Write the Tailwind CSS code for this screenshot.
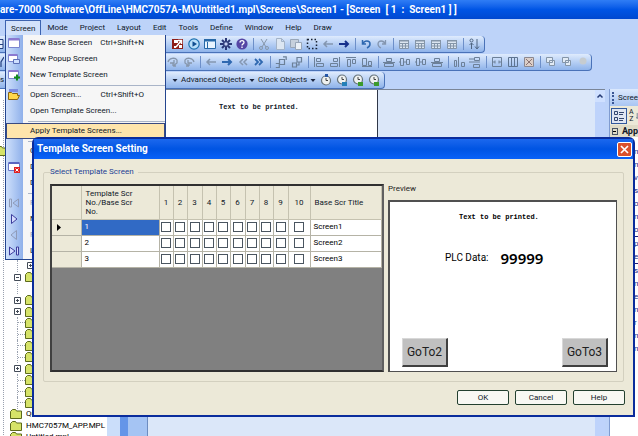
<!DOCTYPE html>
<html lang="en">
<head>
  <meta charset="UTF-8" />
  <meta name="viewport" content="width=device-width, initial-scale=1.0" />
  <title>Template Screen Setting</title>
  <script src="https://cdn.jsdelivr.net/npm/@tailwindcss/browser@4"></script>
</head>
<body class="relative flex h-screen flex-col overflow-hidden bg-[#bdd3f9] font-['Roboto','Noto_Sans',sans-serif] text-[8px] leading-3 text-[#101828]">

  <!-- Icons -->
  <svg class="hidden" xmlns="http://www.w3.org/2000/svg">
    <symbol id="window" viewBox="0 0 12 12"><path fill="#fff" stroke="#7b86cf" d="M.5 1.5h11v9H.5z"/><path fill="#8c7ad0" d="M1 1h10v2.500H1z"/></symbol>
    <symbol id="popup" viewBox="0 0 12 12"><path fill="#fff" stroke="#7b86cf" d="M.5 1.500h9v7h-9z"/><path fill="#8c7ad0" d="M1 1h8v2H1z"/><path fill="#cfe0ff" stroke="#5c70b8" d="M5.500 6.500h6v4h-6z"/></symbol>
    <symbol id="template" viewBox="0 0 12 12"><path fill="#fff" stroke="#7b86cf" d="M.5 1.500h10v8H.5z"/><path fill="#8c7ad0" d="M1 1h9v2H1z"/><path stroke="#118a1c" stroke-width="2" d="M9 5.500v6M6 8.500h6"/></symbol>
    <symbol id="open" viewBox="0 0 12 12"><path fill="#7d8ce0" d="M1 0h9v3H1z"/><path fill="#ffd84a" stroke="#8a6410" d="M.5 10.500v-7h3l1 1h5v2h2l-2 4z"/></symbol>
    <symbol id="remove" viewBox="0 0 12 12"><path fill="#fff" stroke="#6b78c8" d="M.5 1.500h11v8H.5z"/><path fill="#5a66c0" d="M1 1h10v2H1z"/><path fill="#e02020" d="M6 6h6v6H6z"/><path stroke="#fff" d="m7.500 7.500 3 3m0-3-3 3"/></symbol>
    <symbol id="first" viewBox="0 0 12 12"><path fill="none" stroke="currentColor" d="M1.500 2v8h2V2zM10.500 2v8L5 6z"/></symbol>
    <symbol id="next" viewBox="0 0 12 12"><path fill="#d5dcff" stroke="currentColor" d="M3.500 1.500v9L9 6z"/></symbol>
    <symbol id="prev" viewBox="0 0 12 12"><path fill="none" stroke="currentColor" d="M8.500 1.500v9L3 6z"/></symbol>
    <symbol id="last" viewBox="0 0 12 12"><path fill="#d5dcff" stroke="currentColor" d="M1.500 2v8L7 6zM8.500 2v8h2V2z"/></symbol>
    <symbol id="export" viewBox="0 0 12 12"><path fill="#8e1d18" d="M0 1h11v10H0z"/><path fill="#fff" d="M2 2h4v3H2zM2 8h2v2H2zM7 7h3v3H7z"/><path stroke="#fff" stroke-width="1.500" d="m4 9 5-6M6 2.500h3.500V6" fill="none"/></symbol>
    <symbol id="run" viewBox="0 0 12 12"><circle cx="6" cy="6" r="5.200" fill="#b9e0fa" stroke="#1c6fae" stroke-width="1.200"/><path fill="#114f90" d="M4.500 3.200v5.600L9 6z"/></symbol>
    <symbol id="layout" viewBox="0 0 12 12"><path fill="#e8f4ff" stroke="#2768a8" d="M.5 1.500h11v9H.5zM3.500 4v6"/><path fill="#2768a8" d="M0 1h12v2.500H0z"/></symbol>
    <symbol id="gear" viewBox="0 0 12 12"><path stroke="#2b3878" stroke-width="2" d="M6 0v12M0 6h12M2 2l8 8M10 2l-8 8"/><circle cx="6" cy="6" r="2.200" fill="#c5d2f5" stroke="#2b3878"/></symbol>
    <symbol id="help" viewBox="0 0 12 12"><circle cx="6" cy="6" r="5.600" fill="#5545a5"/><path fill="none" stroke="#fff" stroke-width="1.300" d="M4 4.500C4 2 8 2 8 4.500 8 6 6 5.800 6 7.500M6 8.500V10"/></symbol>
    <symbol id="cut" viewBox="0 0 12 12"><path fill="none" stroke="#8797ab" d="m3 1 5 8M9 1 4 9"/><circle cx="3" cy="10" r="1.500" fill="none" stroke="#8797ab"/><circle cx="9" cy="10" r="1.500" fill="none" stroke="#8797ab"/></symbol>
    <symbol id="copy" viewBox="0 0 12 12"><path fill="#dce6f2" stroke="#a3b3c8" d="M2.500.5h5l3 3v8h-8zM7.500.5v3h3"/></symbol>
    <symbol id="paste" viewBox="0 0 12 12"><path fill="#c6d0dc" stroke="#98a6b8" d="M.5 1.500h8v8h-8z"/><path fill="#eaf0f7" stroke="#98a6b8" d="M5.500 4.500h6v7h-6z"/></symbol>
    <symbol id="select" viewBox="0 0 12 12"><path fill="none" stroke="#172032" stroke-width="1.500" stroke-dasharray="1.500 2" d="M1.500 1.500h9v9h-9z"/></symbol>
    <symbol id="left" viewBox="0 0 12 12"><path fill="none" stroke="currentColor" stroke-width="1.500" d="M11 6H2m3-3L2 6l3 3"/></symbol>
    <symbol id="right" viewBox="0 0 12 12"><path fill="none" stroke="currentColor" stroke-width="2" d="M1 6h9M7 3l3 3-3 3"/></symbol>
    <symbol id="lefts" viewBox="0 0 12 12"><path fill="none" stroke="currentColor" stroke-width="1.500" d="M6 3 3 6l3 3m4-6L7 6l3 3"/></symbol>
    <symbol id="rights" viewBox="0 0 12 12"><path fill="none" stroke="currentColor" stroke-width="1.800" d="m2 3 3 3-3 3m4-6 3 3-3 3"/></symbol>
    <symbol id="undo" viewBox="0 0 12 12"><path fill="none" stroke="currentColor" stroke-width="1.500" d="M2.500 2v4H6M3 6c1-4 7-4 7 0 0 2-1 3-3 4"/></symbol>
    <symbol id="redo" viewBox="0 0 12 12"><path fill="none" stroke="currentColor" stroke-width="1.300" d="M9.500 2v4H6m3 0C8 2 2 2 2 6c0 2 1 3 3 4"/></symbol>
    <symbol id="grid" viewBox="0 0 12 12"><path fill="#dbe5f0" stroke="#8495a8" d="M1.500 2.500h9v8h-9zM1.500 5.500h9M1.500 8h9M4.500 5v5M7.500 5v5"/><path fill="#8495a8" d="M1 2h10v1.500H1z"/></symbol>
    <symbol id="updown" viewBox="0 0 12 12"><path fill="none" stroke="#4f6582" d="M3.500 5v6M1.500 7l2-2 2 2M9 1v9M7 8.500 9 11l2-2.500"/><circle cx="3.500" cy="2.500" r="1.500" fill="none" stroke="#4f6582"/></symbol>
    <symbol id="rotl" viewBox="0 0 12 12"><path fill="none" stroke="#8696ac" stroke-width="1.300" d="M1 6c1-4 7-5 9-2v3L6 10M6 10V7m0 3h3M3 7h4V4"/></symbol>
    <symbol id="rotr" viewBox="0 0 12 12"><path fill="none" stroke="#8696ac" stroke-width="1.300" d="M11 6C10 2 4 1 2 4v3l4 3M6 10V7m0 3H3M9 7H5V4"/></symbol>
    <symbol id="group" viewBox="0 0 12 12"><path fill="none" stroke="#6c8098" stroke-width="1.200" d="M4.500 3.500h5v5h-5zM.8 7.500h3.500v4H.8M8 .800h3.200V4"/></symbol>
    <symbol id="ungroup" viewBox="0 0 12 12"><path fill="none" stroke="#6c8098" stroke-width="1.200" d="M6 1.500h4.500V6H6zM1.500 7h4v4h-4zM8 6v3H5"/></symbol>
    <symbol id="al" viewBox="0 0 12 12"><path fill="none" stroke="#6c8098" d="M1.500 1v10M3.500 2.500h4v3h-4zM3.500 7.500h7v3h-7z"/></symbol>
    <symbol id="ar" viewBox="0 0 12 12"><path fill="none" stroke="#6c8098" d="M10.500 1v10M4.500 2.500h4v3h-4zM1.500 7.500h7v3h-7z"/></symbol>
    <symbol id="at" viewBox="0 0 12 12"><path fill="none" stroke="#6c8098" d="M1 1.500h10M2.500 3.500h3v7h-3zM7.500 3.500h3v4h-3z"/></symbol>
    <symbol id="ab" viewBox="0 0 12 12"><path fill="none" stroke="#6c8098" d="M1 10.500h10M1.500 2.500h4v7h-4zM7.500 5.500h3v4h-3z"/></symbol>
    <symbol id="ac" viewBox="0 0 12 12"><path fill="none" stroke="#6c8098" d="M3.500 2.500h5v3h-5zM1.500 7.500h9v3h-9zM0 6.500h12"/></symbol>
    <symbol id="am" viewBox="0 0 12 12"><path fill="none" stroke="#6c8098" d="M1.500 2.500h3v7h-3zM7.500 3.500h3v5h-3zM0 6h1M5 6h2"/></symbol>
    <symbol id="dh" viewBox="0 0 12 12"><path fill="none" stroke="#6c8098" d="M1.500 4.500h2v6h-2zM5.500 1v10M8.500 6.500h3v4h-3z"/></symbol>
    <symbol id="dv" viewBox="0 0 12 12"><path fill="none" stroke="#6c8098" d="M5.500 1.500h5v3h-5zM0 6h11M4.500 8.500h6v3h-6zM0 3h5"/></symbol>
    <symbol id="sw" viewBox="0 0 12 12"><path fill="none" stroke="#6c8098" d="M1.500 1.500h9v9h-9zM3 6h2m2 0h2M4 4.500 2.500 6 4 7.500M8 4.500 9.500 6 8 7.500"/></symbol>
    <symbol id="sh" viewBox="0 0 12 12"><path fill="none" stroke="#5e7490" d="M1.500 1.500h9v9h-9zM4.500 1v10M7.500 1v10"/></symbol>
    <symbol id="sb" viewBox="0 0 12 12"><path fill="#dccfc8" stroke="#8b8890" d="M1.500 1.500h9v9h-9z"/><path stroke="#8b7474" d="m3 3 6 6M9 3 3 9"/></symbol>
    <symbol id="obj" viewBox="0 0 12 12"><path fill="#e2ebf5" stroke="#8495a8" d="M1.500 1.500h6v5h-6zM4.500 4.500h5v5h-5z"/></symbol>
    <symbol id="dot" viewBox="0 0 12 12"><circle cx="6" cy="5" r="3.500" fill="#c6ccd0"/></symbol>
    <symbol id="clock" viewBox="0 0 12 12"><circle cx="6" cy="6.500" r="4.500" fill="#eef1f0" stroke="#66747c" stroke-width="1.200"/><path fill="none" stroke="#444" d="M6 4v2.500h2"/><path fill="currentColor" d="M5 0h3v3H5z"/></symbol>
    <symbol id="clock2" viewBox="0 0 12 12"><circle cx="6" cy="5.500" r="4.500" fill="#eef1f0" stroke="#66747c" stroke-width="1.200"/><path fill="none" stroke="#444" d="M6 3v2.500h2"/><path fill="currentColor" d="M6 8h5v4H6z"/></symbol>
    <symbol id="folder" viewBox="0 0 12 10"><path fill="#d6e368" stroke="#5d6a1c" d="M.5 9.500v-7l2-2h3l1 1.500h5v7.500z"/></symbol>
    <symbol id="caret" viewBox="0 0 12 12"><path fill="#1a2540" d="M3.500 5h5L6 8z"/></symbol>
    <symbol id="edge" viewBox="0 0 4 12"><path fill="#e6efff" stroke="#26417f" d="M-1 1.500h4v9h-4zM-1 6.500h4"/></symbol>
    <symbol id="pen" viewBox="0 0 4 12"><path fill="none" stroke="#26417f" stroke-width="1.200" d="M4 1 1 6v5"/></symbol>
  </svg>

  <header class="h-[19px] shrink-0 overflow-hidden bg-linear-to-b from-[#2f7df5] via-[#0055e5] to-[#0048d0] pt-[3px] text-[10px] leading-[14px] font-bold whitespace-pre text-white">are-7000 Software\OffLine\HMC7057A-M\Untitled1.mpl\Screens\Screen1 - [Screen  [ 1  :  Screen1 ] ]</header>

  <nav class="flex h-[17px] shrink-0 items-stretch pl-[5px] pt-px">
    <button class="border border-b-0 border-[#3d63b0] bg-[#d3e2fb] px-[5px]">Screen</button>
    <button class="px-[6px]">Mode</button>
    <button class="px-[6px]">Project</button>
    <button class="px-[6px]">Layout</button>
    <button class="px-[6px]">Edit</button>
    <button class="px-[6px]">Tools</button>
    <button class="px-[6px]">Define</button>
    <button class="px-[6px]">Window</button>
    <button class="px-[6px]">Help</button>
    <button class="px-[6px]">Draw</button>
  </nav>

  <!-- Toolbars, filled by the script -->
  <div id="bar1" class="flex h-[17px] w-[485px] shrink-0 items-center rounded-r-sm border-r border-b border-[#4a72b8] bg-linear-to-b from-[#dfebfd] to-[#8fb3ea]">
    <svg class="mr-[166px] h-3 w-1 shrink-0"><use href="#edge"/></svg>
  </div>
  <div id="bar2" class="mt-px flex h-[17px] w-[592px] shrink-0 items-center rounded-r-sm border-r border-b border-[#4a72b8] bg-linear-to-b from-[#dfebfd] to-[#8fb3ea]">
    <svg class="mr-[161px] h-3 w-1 shrink-0"><use href="#pen"/></svg>
  </div>
  <div class="mt-px flex h-[17px] w-[385px] shrink-0 items-center rounded-r-sm border-r border-b border-[#4a72b8] bg-linear-to-b from-[#dfebfd] to-[#8fb3ea]">
    <span class="w-[169px] shrink-0">s</span>
    <svg class="size-3"><use href="#caret"/></svg>
    <button class="w-[65px] text-left whitespace-nowrap">Advanced Objects</button>
    <svg class="size-3"><use href="#caret"/></svg>
    <button class="w-[49px] text-left whitespace-nowrap">Clock Objects</button>
    <svg class="size-3"><use href="#caret"/></svg>
    <div class="flex gap-1 pl-px">
      <svg class="size-3 text-[#2457a8]"><use href="#clock"/></svg>
      <svg class="size-3 text-[#2480b8]"><use href="#clock2"/></svg>
      <svg class="size-3 text-[#3c9a2c]"><use href="#clock2"/></svg>
      <svg class="size-3 text-[#3c9a2c]"><use href="#clock2"/></svg>
    </div>
  </div>

  <main class="flex min-h-0 flex-1">
    <!-- Project tree -->
    <aside class="w-[107px] shrink-0 overflow-hidden bg-white pt-[11px]">
      <ul id="tree" class="ml-[3px] grid h-[343px] auto-rows-fr border-l border-dotted border-gray-400"></ul>
    </aside>
    <div class="w-[13px] shrink-0 bg-[#cbdefa]"></div>
    <div class="w-[8px] shrink-0 bg-[#6495e8]"></div>
    <div class="w-[20px] shrink-0 border-r border-[#6d8cc0] bg-[#a5c4f3]"></div>
    <section class="min-w-0 flex-1 border-t border-[#7a8597] bg-[#dbe7f9]">
      <div class="h-[170px] w-[230px] border-r border-[#303848] bg-white pt-[11px] pl-[71px] font-['Liberation_Mono',monospace] text-[7px] font-bold whitespace-nowrap">Text to be printed.</div>
    </section>
    <div class="w-[10px] shrink-0 border-t border-[#7a8597] bg-[#bed3fb]">
      <button class="flex h-3 w-full items-center justify-center bg-[#cfe0ff]" aria-label="Scroll up">
        <svg class="size-2" viewBox="0 0 8 8"><path fill="none" stroke="#253c75" stroke-width="1.500" d="M1.500 5.500 4 3l2.500 2.500"/></svg>
      </button>
    </div>
    <!-- Property grid -->
    <aside class="ml-[4px] w-[29px] shrink-0 overflow-hidden border-l border-[#7f9bd0] bg-white whitespace-nowrap">
      <div class="flex h-[17px] items-center gap-1 bg-linear-to-b from-[#dce9fd] to-[#a9c5f2] pl-[2px]">
        <span class="h-3 border-l-2 border-dotted border-[#3b5795]"></span>Screen
      </div>
      <div class="flex h-[19px] items-center gap-[2px] bg-[#ece9d8] pl-px">
        <button class="border border-[#31589c] bg-[#dfe6f3]" aria-label="Categorized">
          <svg class="h-[14px] w-[14px]" viewBox="0 0 14 14"><path fill="none" stroke="#33476f" d="M2.500 2.500h3v3h-3zM2.500 8.500h3v3h-3zM7 3.500h5M7 5.500h4M7 9.500h5M7 11.500h4"/></svg>
        </button>
        <button class="text-[7px] leading-[7px]"><span class="block">A</span><span class="block">Z</span></button>
        <svg class="h-3 w-1" viewBox="0 0 4 12"><path fill="none" stroke="#33476f" d="M2 1v9M0 8l2 2 2-2"/></svg>
      </div>
      <div class="flex h-3 items-center gap-1 bg-[#e0dcc8] pl-[2px] text-[9px] font-bold">
        <span class="flex size-[7px] items-center justify-center border border-gray-600"><span class="h-px w-[3px] bg-black"></span></span>App
      </div>
      <ul class="pt-2 pl-[24px] leading-[13px] text-[#1c1c78]">
        <li>n</li><li>n</li><li>v</li><li>s</li><li>o</li><li>n</li><li>o</li>
        <li class="border-t border-[#1c1c78]">p</li><li>e</li>
        <li class="border-t border-[#1c1c78]">s</li><li>n</li><li>e</li><li>n</li><li>r</li><li>n</li><li>n</li>
      </ul>
    </aside>
  </main>

  <!-- Screen menu -->
  <div class="absolute top-[35px] left-[5px] w-[161px] border border-t-0 border-[#24458f] bg-[#f6f6f6]">
    <ul id="menu" class="bg-linear-to-r from-[#cfe0fb] to-[#8fb0ea] bg-[length:17px_100%] bg-no-repeat"></ul>
  </div>

  <!-- Dialog -->
  <div role="dialog" aria-labelledby="dialogTitle" class="absolute top-[137px] right-[3px] left-[32px] rounded-t-md border-2 border-[#0a2c9c] bg-[#ece9d8]">
    <div class="flex h-[20px] items-center justify-between bg-linear-to-b from-[#1b68ee] via-[#0054e3] to-[#0a62f8] pr-px pl-[3px]">
      <h1 id="dialogTitle" class="text-[10px] font-bold text-white">Template Screen Setting</h1>
      <button class="flex size-[15px] items-center justify-center rounded-xs border border-white bg-[#d9502c]" aria-label="Close">
        <svg class="size-[9px]" viewBox="0 0 9 9"><path stroke="#fff" stroke-width="1.700" d="m1 1 7 7M8 1 1 8"/></svg>
      </button>
    </div>
    <fieldset class="mx-[9px] mt-[7px] flex gap-1 rounded-xs border border-[#d3d0bf] px-[6px] pb-[9px]">
      <legend class="pr-1 text-[#1d3f94]">Select Template Screen</legend>
      <div class="mt-[6px] h-[188px] w-[334px] shrink-0 border-2 border-t-[#303030] border-r-[#606060] border-b-[#303030] border-l-[#404040] bg-[#808080]">
        <table class="w-full table-fixed border-collapse">
          <colgroup>
            <col class="w-[29px]"><col class="w-[78px]">
            <col class="w-[14px]"><col class="w-[14px]"><col class="w-[15px]"><col class="w-[14px]"><col class="w-[14px]"><col class="w-[15px]"><col class="w-[14px]"><col class="w-[14px]"><col class="w-[15px]">
            <col class="w-[22px]"><col>
          </colgroup>
          <thead>
            <tr class="h-[33px] bg-[#ece9d8] text-left leading-[9px] *:border-r *:border-b *:border-[#c5c2b0] *:p-0 *:font-normal">
              <td></td><th class="pl-[4px]!">Template Scr<br>No./Base Scr<br>No.</th>
              <th class="text-center">1</th><th class="text-center">2</th><th class="text-center">3</th><th class="text-center">4</th><th class="text-center">5</th><th class="text-center">6</th><th class="text-center">7</th><th class="text-center">8</th><th class="text-center">9</th><th class="text-center">10</th>
              <th class="pl-[4px]!">Base Scr Title</th>
            </tr>
          </thead>
          <tbody id="rows"></tbody>
        </table>
      </div>
      <div class="flex min-w-0 flex-1 flex-col">
        <h2 class="my-[5px] text-[#222]">Preview</h2>
        <div class="flex flex-1 flex-col justify-between border border-t-2 border-l-2 border-[#505050] bg-white text-black">
          <div>
            <p class="mt-[9px] pl-[69px] font-['Liberation_Mono',monospace] text-[7px] font-bold whitespace-nowrap">Text to be printed.</p>
            <p class="mt-[25px] flex items-center gap-3 pl-[55px] leading-5"><span class="text-[10px]">PLC Data:</span><b class="font-['Noto_Sans',sans-serif] text-[15px] font-semibold">99999</b></p>
          </div>
          <div class="mb-[4px] flex justify-between pr-[8px] pl-[12px] text-[12px] text-[#202020]">
            <button class="h-[29px] w-[46px] border border-r-2 border-b-2 border-[#d8d8d8] border-r-[#404040] border-b-[#404040] bg-[#c0c0c0]">GoTo2</button>
            <button class="h-[29px] w-[46px] border border-r-2 border-b-2 border-[#d8d8d8] border-r-[#404040] border-b-[#404040] bg-[#c0c0c0]">GoTo3</button>
          </div>
        </div>
      </div>
    </fieldset>
    <div class="mt-[8px] mb-[10px] flex justify-end gap-[6px] pr-[8px]">
      <button class="h-[15px] w-[52px] rounded-xs border border-[#23402f] bg-[#f8f8f3]">OK</button>
      <button class="h-[15px] w-[52px] rounded-xs border border-[#23402f] bg-[#f8f8f3]">Cancel</button>
      <button class="h-[15px] w-[52px] rounded-xs border border-[#23402f] bg-[#f8f8f3]">Help</button>
    </div>
  </div>

  <script>
    const GRAY = 'text-[#8496b0]', NAVY = 'text-[#16308c]', BLUE = 'text-[#2f68b0]';

    function fillBar(id, names) {
      const html = names.map(n => {
        if (n === '|') return '<span class="flex h-3 w-[6px] shrink-0 justify-center"><span class="w-px bg-[#6d8fc9]"></span></span>';
        const [icon, color] = n.split(' ');
        const cls = { navy: NAVY, blue: BLUE }[color] || GRAY;
        return `<button class="flex h-4 w-4 shrink-0 items-center justify-center ${cls}" aria-label="${icon}"><svg class="size-3"><use href="#${icon}"/></svg></button>`;
      }).join('');
      document.getElementById(id).insertAdjacentHTML('beforeend', html);
    }
    fillBar('bar1', ['export', 'run', 'layout', 'gear', 'help', '|', 'cut', 'copy', 'paste', 'select', 'left', 'right navy', '|', 'undo blue', 'redo', '|', 'grid', 'grid', 'grid', 'grid', '|', 'updown']);
    fillBar('bar2', ['rotl', 'rotr', '|', 'left', 'right blue', 'lefts', 'rights blue', '|', 'group', 'ungroup', '|', 'al', 'ar', 'at', 'ab', '|', 'ac', 'am', 'am', 'ac', '|', 'dh', 'dv', '|', 'sw', 'sh', 'sb', '|', 'obj', 'obj', 'dot']);

    // [icon, label, shortcut, state], null is a separator
    const menu = [
      ['window', 'New Base Screen', 'Ctrl+Shift+N'],
      ['popup', 'New Popup Screen'],
      ['template', 'New Template Screen'],
      null,
      ['open', 'Open Screen...', 'Ctrl+Shift+O'],
      ['', 'Open Template Screen...'],
      null,
      ['', 'Apply Template Screens...', '', 'active'],
      null,
      ['', 'C'], ['remove', 'D'], ['', 'D'],
      null,
      ['first', 'F', '', 'off'], ['next', 'N'], ['prev', 'P', '', 'off'], ['last', 'L']
    ];
    document.getElementById('menu').innerHTML = menu.map(m => {
      if (!m) return '<li class="flex h-1 items-center pl-[22px]"><span class="h-px flex-1 bg-[#a9b4c8]"></span></li>';
      const [icon, label, key = '', state] = m;
      const look = state === 'active' ? 'outline -outline-offset-1 outline-[#3a4a80] bg-[#fee5ac]' : state === 'off' ? 'text-[#8f9bb8]' : '';
      const svg = icon ? `<svg class="size-3 ${state === 'off' ? '' : 'text-[#3c3c9c]'}"><use href="#${icon}"/></svg>` : '<span class="size-3"></span>';
      return `<li><button class="flex h-4 w-full items-center pl-[2px] text-left whitespace-nowrap ${look}">${svg}<span class="ml-[10px] flex-1">${label}</span><span class="mr-[21px]">${key}</span></button></li>`;
    }).join('');

    // Tree rows: '+' and '-' have an expander, 'c' is a nested expander, 'f' a folder only
    const tree = ['', '', '', '', 'y', '', '', '', '', '', '', '', '', '', 'c', '-', '', '+', '+', 'f', 'f', 'f', 'f', '+', 'f', 'f', 'f', 'QuickStart.mpl', 'HMC7057M_APP.MPL', 'Untitled.mpl'];
    const folder = '<svg class="h-[10px] w-3 shrink-0"><use href="#folder"/></svg>';
    const line = 'ml-[13px] flex items-center border-l border-dotted border-gray-400';
    const box = t => {
      const bar = t === '-' ? '' : '<path d="M3.500 2v3"/>';
      return `<svg class="size-[7px] shrink-0" viewBox="0 0 7 7"><g fill="none" stroke="#444c58"><path d="M.5.5h6v6h-6zM2 3.500h3"/>${bar}</g></svg>`;
    };
    document.getElementById('tree').innerHTML = tree.map(t => {
      if (t.length > 1) return `<li class="flex items-center gap-1 pl-[6px] text-black">${folder}${t}</li>`;
      if (t === 'y') return `<li class="-ml-2 flex items-center">${folder}</li>`;
      if (t === 'c') return `<li class="${line} pl-[9px]">${box('+')}</li>`;
      if (t === 'f') return `<li class="${line}"><span class="w-[7px] border-t border-dotted border-gray-400"></span>${folder}</li>`;
      if (t === '') return `<li class="${line}"></li>`;
      return `<li class="flex items-center gap-1 pl-[10px]">${box(t)}${folder}</li>`;
    }).join('');

    document.getElementById('rows').innerHTML = [1, 2, 3].map(r => {
      let cells = '';
      for (let c = 1; c <= 10; c++) {
        cells += `<td><input type="checkbox" aria-label="Screen${r}, template ${c}" class="mx-auto block size-[10px] appearance-none border border-[#4a5560] bg-white"></td>`;
      }
      const first = r === 1 ? 'bg-[#316ac5] text-white' : '';
      return `<tr class="h-[16px] bg-white text-black *:border-r *:border-b *:border-[#b5b3a6] *:p-0">
        <td class="bg-[#ece9d8]">${r === 1 ? '<svg class="ml-1 size-[7px]" viewBox="0 0 7 7"><path d="M1 0v7l4-3.500z"/></svg>' : ''}</td>
        <td class="pl-[3px]! ${first}">${r}</td>${cells}<td class="pl-[3px]!">Screen${r}</td></tr>`;
    }).join('');
  </script>
</body>
</html>
